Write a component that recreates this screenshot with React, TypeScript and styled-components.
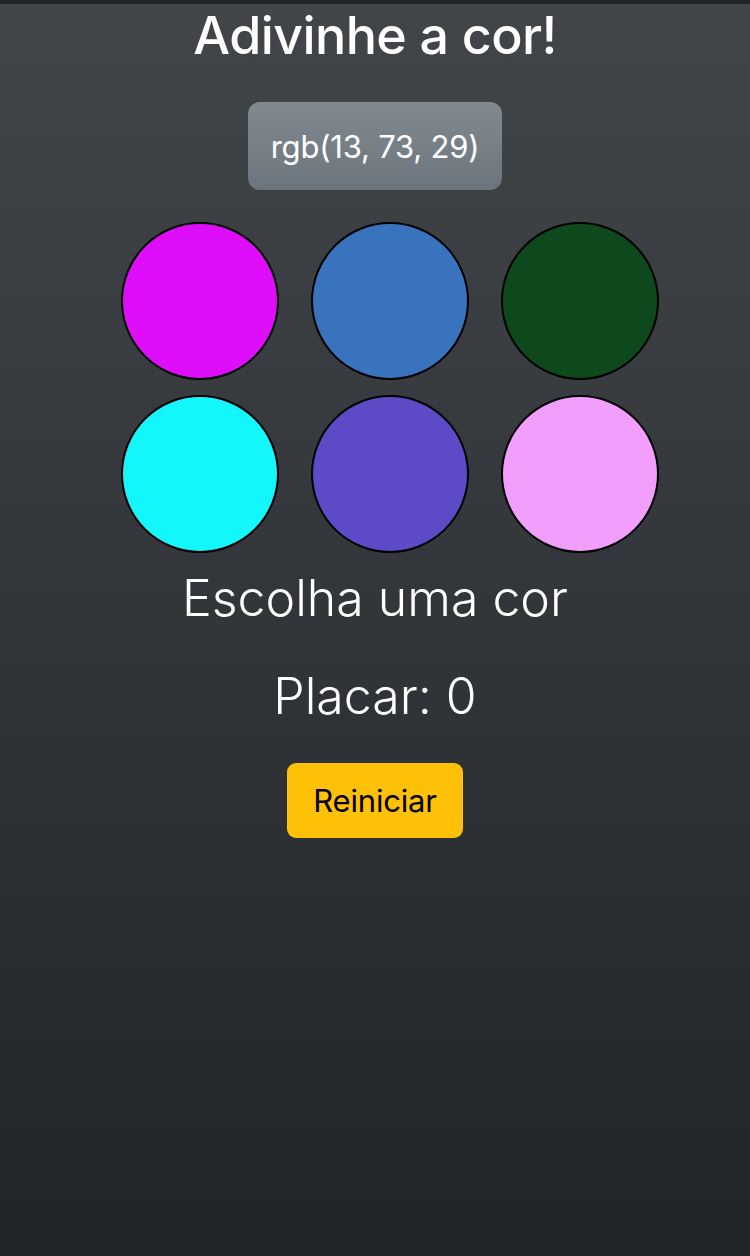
import React from "react";
import styled, { createGlobalStyle } from "styled-components";

const GlobalStyle = createGlobalStyle`
  html, body {
    margin: 0;
    padding: 0;
    background: #212529;
  }
  body {
    font-family: Inter, "Noto Sans", "Liberation Sans", sans-serif;
    color: #fff;
  }
  * { box-sizing: border-box; }
`;

const Page = styled.div`
  padding-top: 4px;
  background: #212529;
  min-height: 100vh;
`;

const Main = styled.main`
  min-height: calc(100vh - 4px);
  background-color: #212529;
  background-image: linear-gradient(180deg, rgba(255, 255, 255, 0.15), rgba(255, 255, 255, 0));
  display: flex;
  flex-direction: column;
  align-items: center;
`;

const Title = styled.h1`
  margin: 0;
  font-size: 52px;
  font-weight: 500;
  line-height: 64px;
  color: #fff;
  letter-spacing: -0.6px;
`;

const Target = styled.div`
  margin-top: 34px;
  height: 88px;
  width: 254px;
  border-radius: 12px;
  background-color: #6c757d;
  background-image: linear-gradient(180deg, rgba(255, 255, 255, 0.15), rgba(255, 255, 255, 0));
  display: flex;
  align-items: center;
  justify-content: center;
  font-size: 31px;
  color: #fff;
  letter-spacing: -0.2px;
`;

const Grid = styled.div`
  margin-top: 32px;
  padding-left: 30px;
  display: grid;
  grid-template-columns: repeat(3, 158px);
  column-gap: 32px;
  row-gap: 15px;
`;

const Swatch = styled.button<{ $color: string }>`
  width: 158px;
  height: 158px;
  border-radius: 50%;
  border: 2px solid #000;
  background: ${(p) => p.$color};
  padding: 0;
  cursor: pointer;
`;

const Message = styled.p<{ $top: number }>`
  margin: ${(p) => p.$top}px 0 0;
  font-size: 50px;
  font-weight: 300;
  line-height: 60px;
  color: #fff;
`;

const ResetButton = styled.button`
  margin-top: 37px;
  width: 176px;
  height: 75px;
  border: none;
  border-radius: 9px;
  background: #ffc107;
  color: #000;
  font-family: inherit;
  font-size: 31px;
  font-weight: 400;
  letter-spacing: -0.2px;
  cursor: pointer;
`;

const colors = ["#de0efa", "#3973bd", "#0d491d", "#13f6fb", "#5d4ac7", "#f29efd"];

export default function App() {
  return (
    <>
      <GlobalStyle />
      <Page>
        <Main>
          <Title>Adivinhe a cor!</Title>
          <Target>rgb(13, 73, 29)</Target>
          <Grid>
            {colors.map((c) => (
              <Swatch key={c} $color={c} aria-label={c} />
            ))}
          </Grid>
          <Message $top={15}>Escolha uma cor</Message>
          <Message $top={38}>Placar: 0</Message>
          <ResetButton>Reiniciar</ResetButton>
        </Main>
      </Page>
    </>
  );
}
